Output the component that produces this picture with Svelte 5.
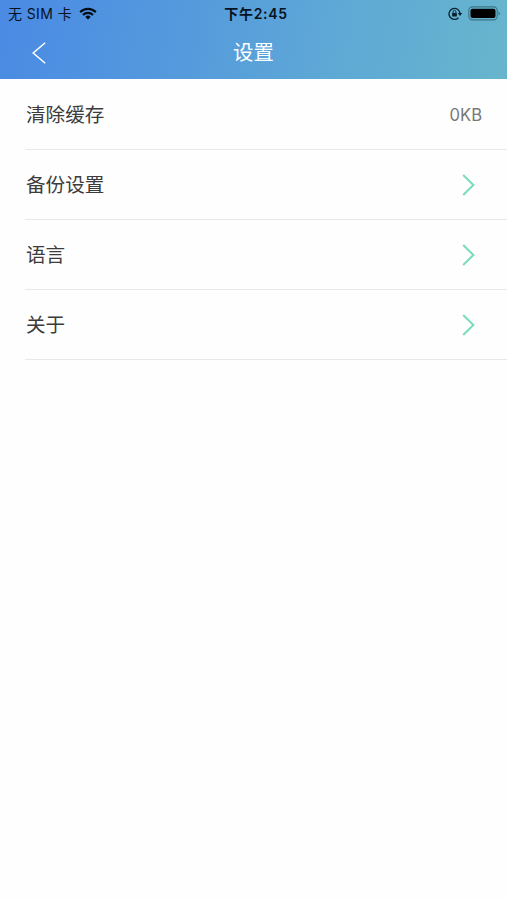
<script lang="ts">
  type Item = { label: string; value?: string }

  const items: Item[] = [
    { label: '清除缓存', value: '0KB' },
    { label: '备份设置' },
    { label: '语言' },
    { label: '关于' },
  ]
</script>

<div class="screen">
  <header>
    <div class="status">
      <div class="carrier">
        <span>无 SIM 卡</span>
        <svg width="18" height="13" viewBox="0 0 18 13" fill="none" stroke="#050d18" stroke-width="2.2">
          <path d="M1.2 5.1a11 11 0 0 1 15.6 0" />
          <path d="M4 8a7.1 7.1 0 0 1 10 0" />
          <path d="M9 12.6 6.3 9.9a3.8 3.8 0 0 1 5.4 0z" fill="#050d18" stroke="none" />
        </svg>
      </div>
      <span class="time">下午2:45</span>
      <div class="indicators">
        <svg width="15" height="14" viewBox="0 0 15 14" fill="none" stroke="#0b2130">
          <path d="M10.5 10.7A5.5 5.5 0 1 1 12 6.4" stroke-width="1.3" />
          <path d="M9.8 6.1h4.4l-2.2 2.8z" fill="#0b2130" stroke="none" />
          <rect x="4.1" y="5.9" width="4.8" height="3.5" rx="0.5" fill="#0b2130" stroke="none" />
          <path d="M5.1 6.1V4.8a1.4 1.4 0 0 1 2.8 0v1.3" stroke-width="0.9" />
        </svg>
        <svg width="33" height="15" viewBox="0 0 33 15">
          <rect x="0.8" y="0.9" width="28.4" height="13" rx="3.6" fill="none" stroke="#3d7485" stroke-width="1.1" />
          <rect x="2.5" y="2.7" width="25" height="9.2" rx="2" fill="#000" />
          <path d="M30.6 5.2c1.7.7 1.7 3.7 0 4.4z" fill="#3d7485" />
        </svg>
      </div>
    </div>
    <nav>
      <button class="back" aria-label="返回">
        <svg width="14" height="22" viewBox="0 0 14 22" fill="none" stroke="#fff" stroke-width="1.5">
          <path d="M13.2 0.8 1.2 11l12 10.2" />
        </svg>
      </button>
      <h1>设置</h1>
    </nav>
  </header>

  <ul>
    {#each items as item}
      <li>
        <span class="label">{item.label}</span>
        {#if item.value}
          <span class="value">{item.value}</span>
        {:else}
          <svg class="chevron" width="13" height="22" viewBox="0 0 13 22" fill="none" stroke="#7adbbd" stroke-width="2">
            <path d="M1.2 1 11.4 11l-10.2 10" />
          </svg>
        {/if}
      </li>
    {/each}
  </ul>
</div>

<style>
  :global(body) {
    background: #fefefe;
  }

  .screen {
    box-sizing: border-box;
    min-height: 900px;
    background: #fefefe;
    font-family: Inter, 'Noto Sans CJK SC', sans-serif;
  }

  header {
    height: 79px;
    background: linear-gradient(100deg, #4a8ae4 0%, #559bdc 38%, #5ea8d6 65%, #67b5cd 100%);
  }

  .status {
    height: 27px;
    display: grid;
    grid-template-columns: 1fr auto 1fr;
    align-items: center;
    padding: 0 6px 0 8px;
    color: #07121f;
    font-size: 14px;
    line-height: 20px;
  }

  .carrier,
  .indicators {
    display: flex;
    align-items: center;
  }

  .carrier {
    gap: 7px;
    letter-spacing: 0.4px;
  }

  .indicators {
    justify-content: flex-end;
    gap: 5px;
  }

  .time {
    padding-left: 3px;
    font-weight: 600;
    letter-spacing: 0.7px;
  }

  nav {
    height: 51px;
    display: grid;
    grid-template-columns: 60px 1fr 60px;
    align-items: center;
  }

  .back {
    display: flex;
    padding: 0 0 0 32px;
    border: none;
    background: none;
  }

  h1 {
    margin: 0;
    color: #fff;
    font-size: 20.4px;
    font-weight: 400;
    line-height: 28px;
    text-align: center;
  }

  ul {
    margin: 0;
    padding: 1px 0 0 25px;
    list-style: none;
  }

  li {
    box-sizing: border-box;
    height: 70px;
    display: flex;
    align-items: center;
    justify-content: space-between;
    padding: 0 25px 0 1px;
    border-bottom: 1px solid #e8e8e8;
  }

  .label {
    color: #3c3c3c;
    font-size: 19.6px;
    line-height: 28px;
  }

  .value {
    color: #777;
    font-size: 16.6px;
  }

  .chevron {
    margin-right: 7px;
  }
</style>
